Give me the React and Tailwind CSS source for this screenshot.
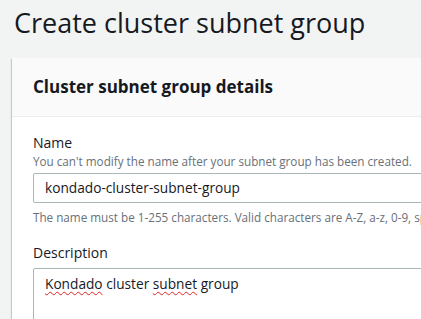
import React from 'react';

const App = () => {
  return (
    <div className="min-h-screen w-[421px] h-[319px] overflow-hidden bg-[#f2f3f3] text-[#16191f]" style={{ fontFamily: '"Open Sans", "Noto Sans", sans-serif' }}>
      <h1 className="pl-[14px] pt-[4px] text-[27px] leading-[38px] font-normal whitespace-nowrap">Create cluster subnet group</h1>

      <div className="ml-[12px] mt-[16px] w-[600px] bg-white shadow-[0_1px_1px_0_rgba(0,28,36,0.3),1px_1px_1px_0_rgba(0,28,36,0.15),-1px_1px_1px_0_rgba(0,28,36,0.15)]">
        <div className="bg-[#fafafa] border-b border-[#eaeded] px-[21px] h-[59px] flex items-center">
          <h2 className="text-[17px] font-bold leading-[24px] whitespace-nowrap">Cluster subnet group details</h2>
        </div>

        <div className="px-[21px] pt-[16px]">
          <label className="block text-[14px] leading-[20px]">Name</label>
          <p className="text-[11.7px] leading-[16px] text-[#687078] whitespace-nowrap">You can't modify the name after your subnet group has been created.</p>
          <div className="mt-[4px] h-[30px] border border-[#aab7b8] rounded-[2px] flex items-center px-[11px] text-[13.7px]">
            kondado-cluster-subnet-group
          </div>
          <p className="mt-[6px] text-[11.7px] leading-[16px] text-[#687078] whitespace-nowrap">The name must be 1-255 characters. Valid characters are A-Z, a-z, 0-9, spaces, and ._-</p>

          <label className="block mt-[18px] text-[14px] leading-[20px]">Description</label>
          <div className="mt-[5px] h-[80px] border border-[#aab7b8] rounded-[2px] px-[11px] pt-[4px] text-[13.7px] leading-[22px]">
            <span className="underline decoration-wavy decoration-[#e02424] decoration-1 underline-offset-2">Kondado</span> cluster <span className="underline decoration-wavy decoration-[#e02424] decoration-1 underline-offset-2">subnet</span> group
          </div>
        </div>
      </div>
    </div>
  );
};

export default App;
